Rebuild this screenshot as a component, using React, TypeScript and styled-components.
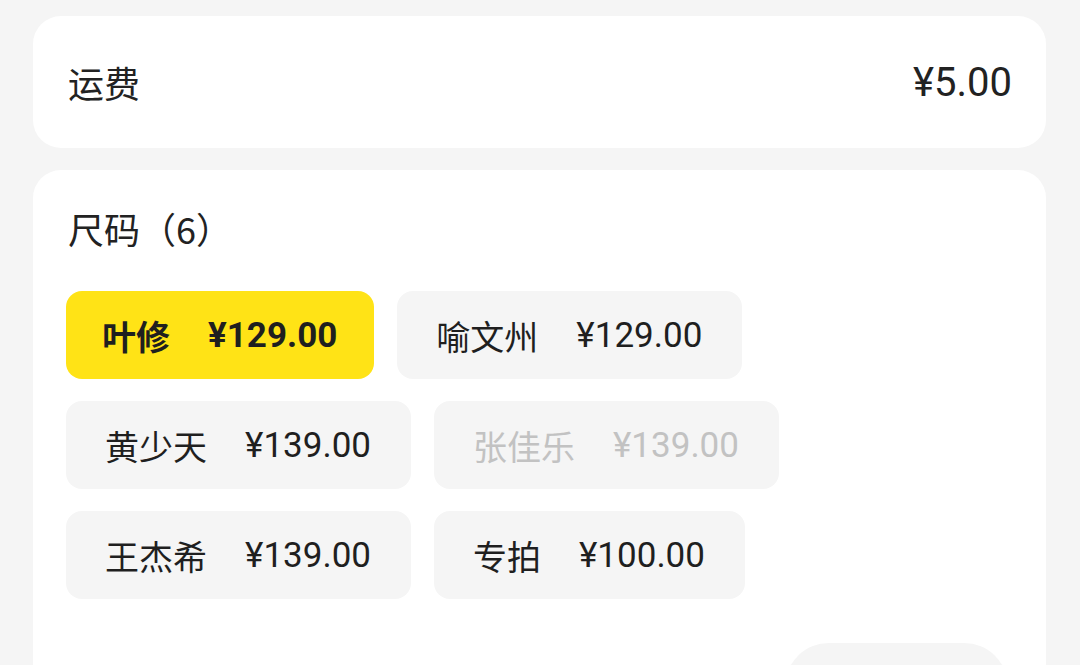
import React from "react";
import styled, { createGlobalStyle } from "styled-components";

const GlobalStyle = createGlobalStyle`
  html, body {
    margin: 0;
    padding: 0;
    background-color: #f5f5f5;
  }
  body {
    font-family: Roboto, "Noto Sans CJK SC", "Noto Sans", sans-serif;
    color: #222222;
  }
`;

const Page = styled.div`
  display: flex;
  flex-direction: column;
  gap: 22px;
  padding: 16px 34px 0 33px;
  height: 665px;
  overflow: hidden;
  box-sizing: border-box;
`;

const Card = styled.div`
  flex-shrink: 0;
  background-color: #ffffff;
  border-radius: 28px;
`;

const FeeCard = styled(Card)`
  display: flex;
  align-items: center;
  justify-content: space-between;
  height: 132px;
  padding: 0 34px 0 35px;
`;

const FeeLabel = styled.span`
  font-size: 36px;
  font-family: "Noto Sans CJK SC", sans-serif;
`;

const FeeValue = styled.span`
  font-size: 40px;
`;

const SizeCard = styled(Card)`
  display: flex;
  flex-direction: column;
  padding: 31px 38px 60px 33px;
`;

const Title = styled.div`
  font-size: 36px;
  line-height: 54px;
  padding-left: 2px;
  font-family: "Noto Sans CJK SC", sans-serif;
`;

const Chips = styled.div`
  display: flex;
  flex-wrap: wrap;
  gap: 22px 23px;
  margin-top: 36px;
`;

const Chip = styled.div<{ $active?: boolean; $disabled?: boolean }>`
  display: flex;
  align-items: center;
  height: 88px;
  padding: 0 40px 0 39px;
  border-radius: 16px;
  font-size: 34px;
  background-color: ${(p) => (p.$active ? "#ffe316" : "#f5f5f5")};
  color: ${(p) => (p.$disabled ? "#c2c2c2" : "#1f1f1f")};
  font-weight: ${(p) => (p.$active ? 700 : 400)};
  ${(p) => p.$active && "padding: 0 37px 0 36px;"}
`;

const Name = styled.span`
  font-family: "Noto Sans CJK SC", sans-serif;
`;

const Price = styled.span`
  margin-left: 38px;
  font-size: 35px;
`;

const Footer = styled.div`
  display: flex;
  justify-content: flex-end;
  margin-top: 44px;
`;

const PillButton = styled.div`
  width: 223px;
  height: 88px;
  border-radius: 44px;
  background-color: #f5f5f5;
`;

const sizes = [
  { name: "叶修", price: "¥129.00", active: true },
  { name: "喻文州", price: "¥129.00" },
  { name: "黄少天", price: "¥139.00" },
  { name: "张佳乐", price: "¥139.00", disabled: true },
  { name: "王杰希", price: "¥139.00" },
  { name: "专拍", price: "¥100.00" },
];

export default function App() {
  return (
    <>
      <GlobalStyle />
      <Page>
        <FeeCard>
          <FeeLabel>运费</FeeLabel>
          <FeeValue>¥5.00</FeeValue>
        </FeeCard>

        <SizeCard>
          <Title>尺码（6）</Title>
          <Chips>
            {sizes.map((s) => (
              <Chip key={s.name} $active={s.active} $disabled={s.disabled}>
                <Name>{s.name}</Name>
                <Price>{s.price}</Price>
              </Chip>
            ))}
          </Chips>
          <Footer>
            <PillButton />
          </Footer>
        </SizeCard>
      </Page>
    </>
  );
}
